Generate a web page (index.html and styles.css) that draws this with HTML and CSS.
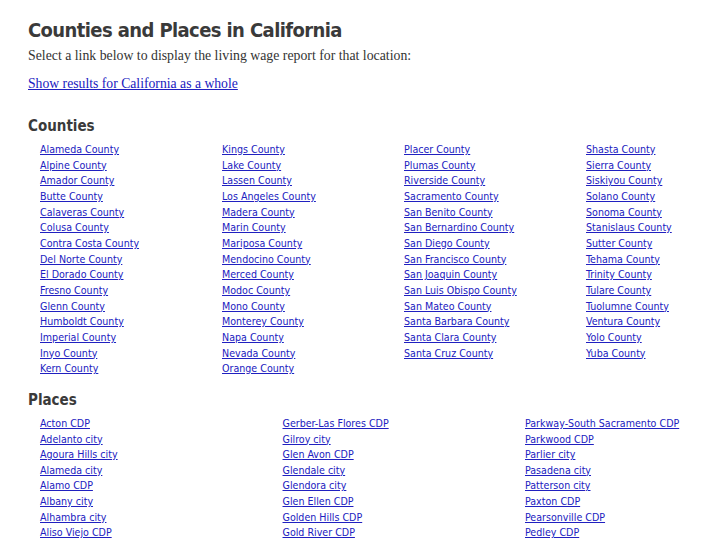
FILE: index.html
```html
<!DOCTYPE html>
<html lang="en">
<head>
    <meta charset="UTF-8">
    <meta name="viewport" content="width=device-width, initial-scale=1.0">
    <title>Counties and Places in California</title>
    <link rel="stylesheet" href="styles.css">
</head>
<body>
    <div class="page">
        <h1>Counties and Places in California</h1>
        <p class="intro">Select a link below to display the living wage report for that location:</p>
        <p class="state-link"><a href="#">Show results for California as a whole</a></p>

        <h2>Counties</h2>
        <div class="columns counties">
            <ul>
                <li><a href="#">Alameda County</a></li>
                <li><a href="#">Alpine County</a></li>
                <li><a href="#">Amador County</a></li>
                <li><a href="#">Butte County</a></li>
                <li><a href="#">Calaveras County</a></li>
                <li><a href="#">Colusa County</a></li>
                <li><a href="#">Contra Costa County</a></li>
                <li><a href="#">Del Norte County</a></li>
                <li><a href="#">El Dorado County</a></li>
                <li><a href="#">Fresno County</a></li>
                <li><a href="#">Glenn County</a></li>
                <li><a href="#">Humboldt County</a></li>
                <li><a href="#">Imperial County</a></li>
                <li><a href="#">Inyo County</a></li>
                <li><a href="#">Kern County</a></li>
            </ul>
            <ul>
                <li><a href="#">Kings County</a></li>
                <li><a href="#">Lake County</a></li>
                <li><a href="#">Lassen County</a></li>
                <li><a href="#">Los Angeles County</a></li>
                <li><a href="#">Madera County</a></li>
                <li><a href="#">Marin County</a></li>
                <li><a href="#">Mariposa County</a></li>
                <li><a href="#">Mendocino County</a></li>
                <li><a href="#">Merced County</a></li>
                <li><a href="#">Modoc County</a></li>
                <li><a href="#">Mono County</a></li>
                <li><a href="#">Monterey County</a></li>
                <li><a href="#">Napa County</a></li>
                <li><a href="#">Nevada County</a></li>
                <li><a href="#">Orange County</a></li>
            </ul>
            <ul>
                <li><a href="#">Placer County</a></li>
                <li><a href="#">Plumas County</a></li>
                <li><a href="#">Riverside County</a></li>
                <li><a href="#">Sacramento County</a></li>
                <li><a href="#">San Benito County</a></li>
                <li><a href="#">San Bernardino County</a></li>
                <li><a href="#">San Diego County</a></li>
                <li><a href="#">San Francisco County</a></li>
                <li><a href="#">San Joaquin County</a></li>
                <li><a href="#">San Luis Obispo County</a></li>
                <li><a href="#">San Mateo County</a></li>
                <li><a href="#">Santa Barbara County</a></li>
                <li><a href="#">Santa Clara County</a></li>
                <li><a href="#">Santa Cruz County</a></li>
            </ul>
            <ul>
                <li><a href="#">Shasta County</a></li>
                <li><a href="#">Sierra County</a></li>
                <li><a href="#">Siskiyou County</a></li>
                <li><a href="#">Solano County</a></li>
                <li><a href="#">Sonoma County</a></li>
                <li><a href="#">Stanislaus County</a></li>
                <li><a href="#">Sutter County</a></li>
                <li><a href="#">Tehama County</a></li>
                <li><a href="#">Trinity County</a></li>
                <li><a href="#">Tulare County</a></li>
                <li><a href="#">Tuolumne County</a></li>
                <li><a href="#">Ventura County</a></li>
                <li><a href="#">Yolo County</a></li>
                <li><a href="#">Yuba County</a></li>
            </ul>
        </div>

        <h2 class="places-title">Places</h2>
        <div class="columns places">
            <ul>
                <li><a href="#">Acton CDP</a></li>
                <li><a href="#">Adelanto city</a></li>
                <li><a href="#">Agoura Hills city</a></li>
                <li><a href="#">Alameda city</a></li>
                <li><a href="#">Alamo CDP</a></li>
                <li><a href="#">Albany city</a></li>
                <li><a href="#">Alhambra city</a></li>
                <li><a href="#">Aliso Viejo CDP</a></li>
            </ul>
            <ul>
                <li><a href="#">Gerber-Las Flores CDP</a></li>
                <li><a href="#">Gilroy city</a></li>
                <li><a href="#">Glen Avon CDP</a></li>
                <li><a href="#">Glendale city</a></li>
                <li><a href="#">Glendora city</a></li>
                <li><a href="#">Glen Ellen CDP</a></li>
                <li><a href="#">Golden Hills CDP</a></li>
                <li><a href="#">Gold River CDP</a></li>
            </ul>
            <ul>
                <li><a href="#">Parkway-South Sacramento CDP</a></li>
                <li><a href="#">Parkwood CDP</a></li>
                <li><a href="#">Parlier city</a></li>
                <li><a href="#">Pasadena city</a></li>
                <li><a href="#">Patterson city</a></li>
                <li><a href="#">Paxton CDP</a></li>
                <li><a href="#">Pearsonville CDP</a></li>
                <li><a href="#">Pedley CDP</a></li>
            </ul>
        </div>
    </div>
</body>
</html>
```

FILE: styles.css
```css
html {
    overflow: hidden;
}
body {
    margin: 0;
    background: #fff;
    color: #333;
    font-family: "Liberation Serif", serif;
}
.page {
    padding: 16px 0 0 28px;
}
h1, h2, .columns li {
    font-family: "DejaVu Sans Condensed", "DejaVu Sans", sans-serif;
    font-stretch: condensed;
}
h1 {
    font-size: 20px;
    font-weight: bold;
    letter-spacing: -0.6px;
    color: #3a3a3a;
    margin: 0;
    line-height: 28px;
}
.intro {
    font-size: 13.8px;
    margin: 2px 0 0;
    line-height: 20px;
}
.state-link {
    font-size: 13.7px;
    margin: 8px 0 0;
    line-height: 20px;
}
a {
    color: #2020c0;
}
h2 {
    font-size: 15px;
    font-weight: bold;
    color: #3a3a3a;
    margin: 20px 0 0;
    line-height: 24px;
}
.places-title {
    margin-top: 11px;
}
.columns {
    display: grid;
    padding-left: 12px;
    margin-top: 4px;
}
.counties {
    grid-template-columns: repeat(3, 182px) auto;
}
.places {
    grid-template-columns: repeat(2, 242.5px) auto;
}
.columns ul {
    list-style: none;
    margin: 0;
    padding: 0;
}
.columns li {
    font-size: 10.6px;
    line-height: 15.65px;
}
```
